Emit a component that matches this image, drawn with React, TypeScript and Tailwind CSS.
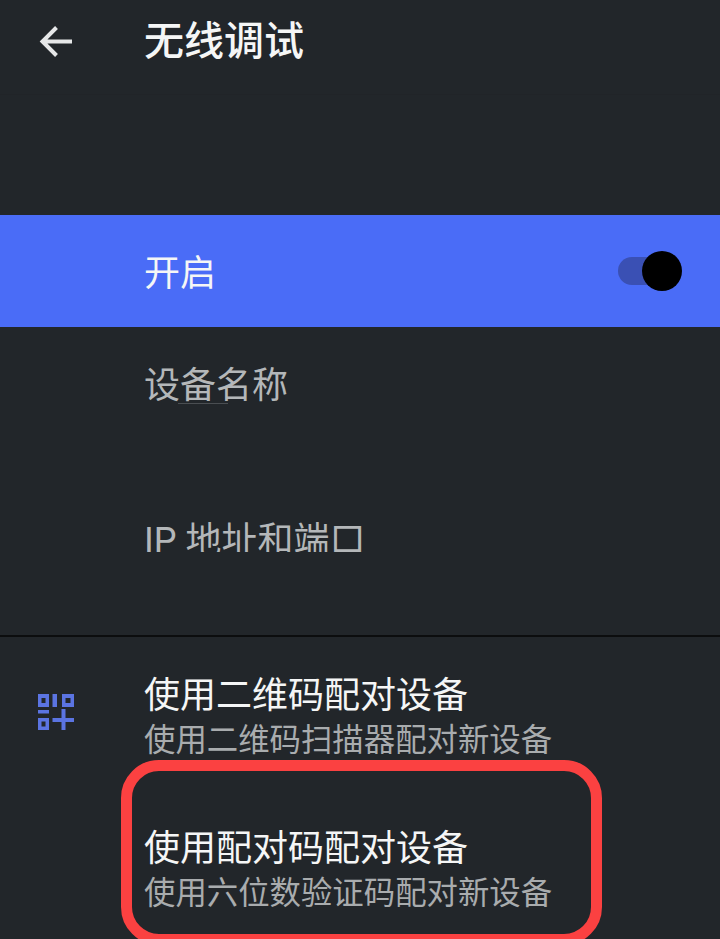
import React from 'react';

const FONT = "font-['Roboto','Noto_Sans_CJK_SC',sans-serif]";

const QrIcon = () => (
  <svg width="38" height="37" viewBox="0 0 38 37" fill="none" className="block">
    <g fill="#5b74e2">
      <path fillRule="evenodd" d="M1 0h11v13H1zM4.500 4v5h4V4z" />
      <path fillRule="evenodd" d="M25 0h12v13H25zM28.500 4v5h5V4z" />
      <rect x="15.500" y="0" width="4.500" height="13" />
      <rect x="1" y="16" width="11" height="3.500" />
      <path fillRule="evenodd" d="M1 24h11v12H1zM4.500 27.500v5h4v-5z" />
      <rect x="15.500" y="24" width="21.500" height="4" />
      <rect x="24.500" y="15" width="4" height="21" />
    </g>
  </svg>
);

const PairRow = ({ title, desc, icon }: { title: string; desc: string; icon?: boolean }) => (
  <div className="flex h-[153px]">
    <div className="w-[144px] shrink-0 pl-[37px] pt-[57px]">{icon && <QrIcon />}</div>
    <div className="pt-[36px]">
      <p className="text-[36px] leading-[47px] text-[#f5f6f6]">{title}</p>
      <p className="text-[31.400px] leading-[41px] text-[#a9acae]">{desc}</p>
    </div>
  </div>
);

export default function App() {
  return (
    <div className={`relative w-[720px] h-[939px] overflow-hidden bg-[#22262a] ${FONT}`}>
      <header className="flex items-center h-[95px] pb-[10px] bg-[#22262a] border-b border-[#212428]">
        <svg width="36" height="34" viewBox="0 0 36 34" fill="none" className="ml-[38px] shrink-0">
          <path d="M34 16.500H5M18.500 2.500 4.500 16.500l14 14" stroke="#e6e7e8" strokeWidth="4" />
        </svg>
        <h1 className="ml-[70px] text-[40px] leading-[50px] font-medium text-[#f5f6f6]">无线调试</h1>
      </header>

      <div className="h-[120px]" />

      <div className="flex items-center justify-between h-[112px] bg-[#4a6cf7] pl-[144px] pr-[38px]">
        <span className="text-[36px] leading-[46px] text-[#f5f6f6] mt-[5px]">开启</span>
        <div className="flex items-center">
          <div className="w-[52px] h-[28px] rounded-full bg-[#3a50b4]" />
          <div className="w-[40px] h-[40px] -ml-[28px] rounded-full bg-black" />
        </div>
      </div>

      <div className="h-[310px] border-b-2 border-[#0c0d0e] pl-[144px]">
        <div className="pt-[36px] h-[161px]">
          <p className="text-[36px] leading-[34px] h-[40px] pt-[6px] text-[#b4b7b9]">设备名称</p>
          <div className="ml-[34px] w-[50px] h-px bg-[#4a4e52]" />
        </div>
        <div className="h-[64px] overflow-hidden">
          <p className="text-[36px] leading-[46px] pt-[30px] text-[#b4b7b9]">IP 地址和端口</p>
        </div>
      </div>

      <PairRow icon title="使用二维码配对设备" desc="使用二维码扫描器配对新设备" />
      <PairRow title="使用配对码配对设备" desc="使用六位数验证码配对新设备" />

      <div className="absolute left-[121px] top-[760px] w-[481px] h-[185px] rounded-[38px] border-[11px] border-[#fb4141]" />
    </div>
  );
}
